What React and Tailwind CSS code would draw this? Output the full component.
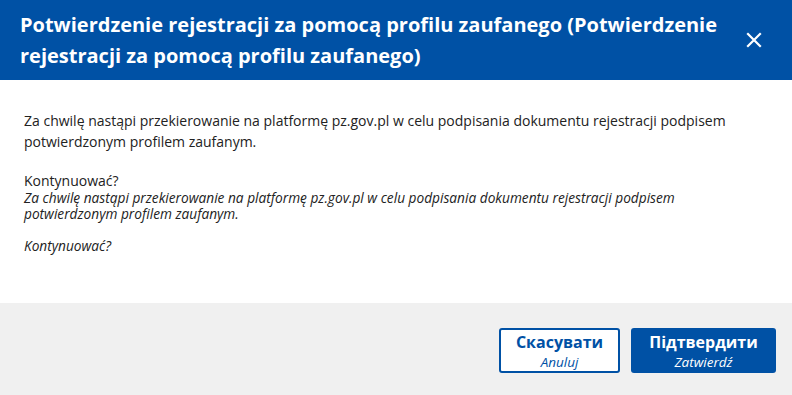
export default function App() {
  return (
    <div className="w-[792px] h-[395px] flex flex-col bg-white font-['Open_Sans',sans-serif]">
      {/* Nagłówek */}
      <div className="h-[80px] bg-[#0051a5] flex items-center justify-between pl-[20px] pr-[30px]">
        <h1 className="text-[20px] leading-[31px] font-bold text-white w-[700px]">
          Potwierdzenie rejestracji za pomocą profilu zaufanego (Potwierdzenie rejestracji za pomocą profilu zaufanego)
        </h1>
        <button className="text-white">
          <svg width="16" height="16" viewBox="0 0 16 16" fill="none" stroke="currentColor" strokeWidth="2.2" strokeLinecap="square">
            <path d="M2 2L14 14M14 2L2 14" />
          </svg>
        </button>
      </div>

      {/* Treść */}
      <div className="flex-1 px-[24px] pt-[30px] text-[#222]">
        <p className="text-[14px] leading-[21px]">
          Za chwilę nastąpi przekierowanie na platformę pz.gov.pl w celu podpisania dokumentu rejestracji podpisem potwierdzonym profilem zaufanym.
        </p>
        <p className="text-[14px] leading-[19px] mt-[19px]">Kontynuować?</p>
        <p className="text-[13.7px] leading-[16px] italic w-[680px]">
          Za chwilę nastąpi przekierowanie na platformę pz.gov.pl w celu podpisania dokumentu rejestracji podpisem potwierdzonym profilem zaufanym.
        </p>
        <p className="text-[13.7px] leading-[16px] italic mt-[16px]">Kontynuować?</p>
      </div>

      {/* Stopka */}
      <div className="h-[92px] bg-[#f0f0f0] flex justify-end items-start pt-[25px] pr-[16px] gap-[11px]">
        <button className="w-[121px] h-[45px] rounded-[3px] border-2 border-[#0051a5] bg-white flex flex-col items-center justify-center">
          <span className="text-[16px] leading-[22px] font-bold text-[#0051a5]">Скасувати</span>
          <span className="text-[13.5px] leading-[18px] italic text-[#0051a5]">Anuluj</span>
        </button>
        <button className="w-[145px] h-[45px] rounded-[3px] bg-[#0051a5] flex flex-col items-center justify-center">
          <span className="text-[16px] leading-[22px] font-bold text-white">Підтвердити</span>
          <span className="text-[13.5px] leading-[18px] italic text-white">Zatwierdź</span>
        </button>
      </div>
    </div>
  );
}
